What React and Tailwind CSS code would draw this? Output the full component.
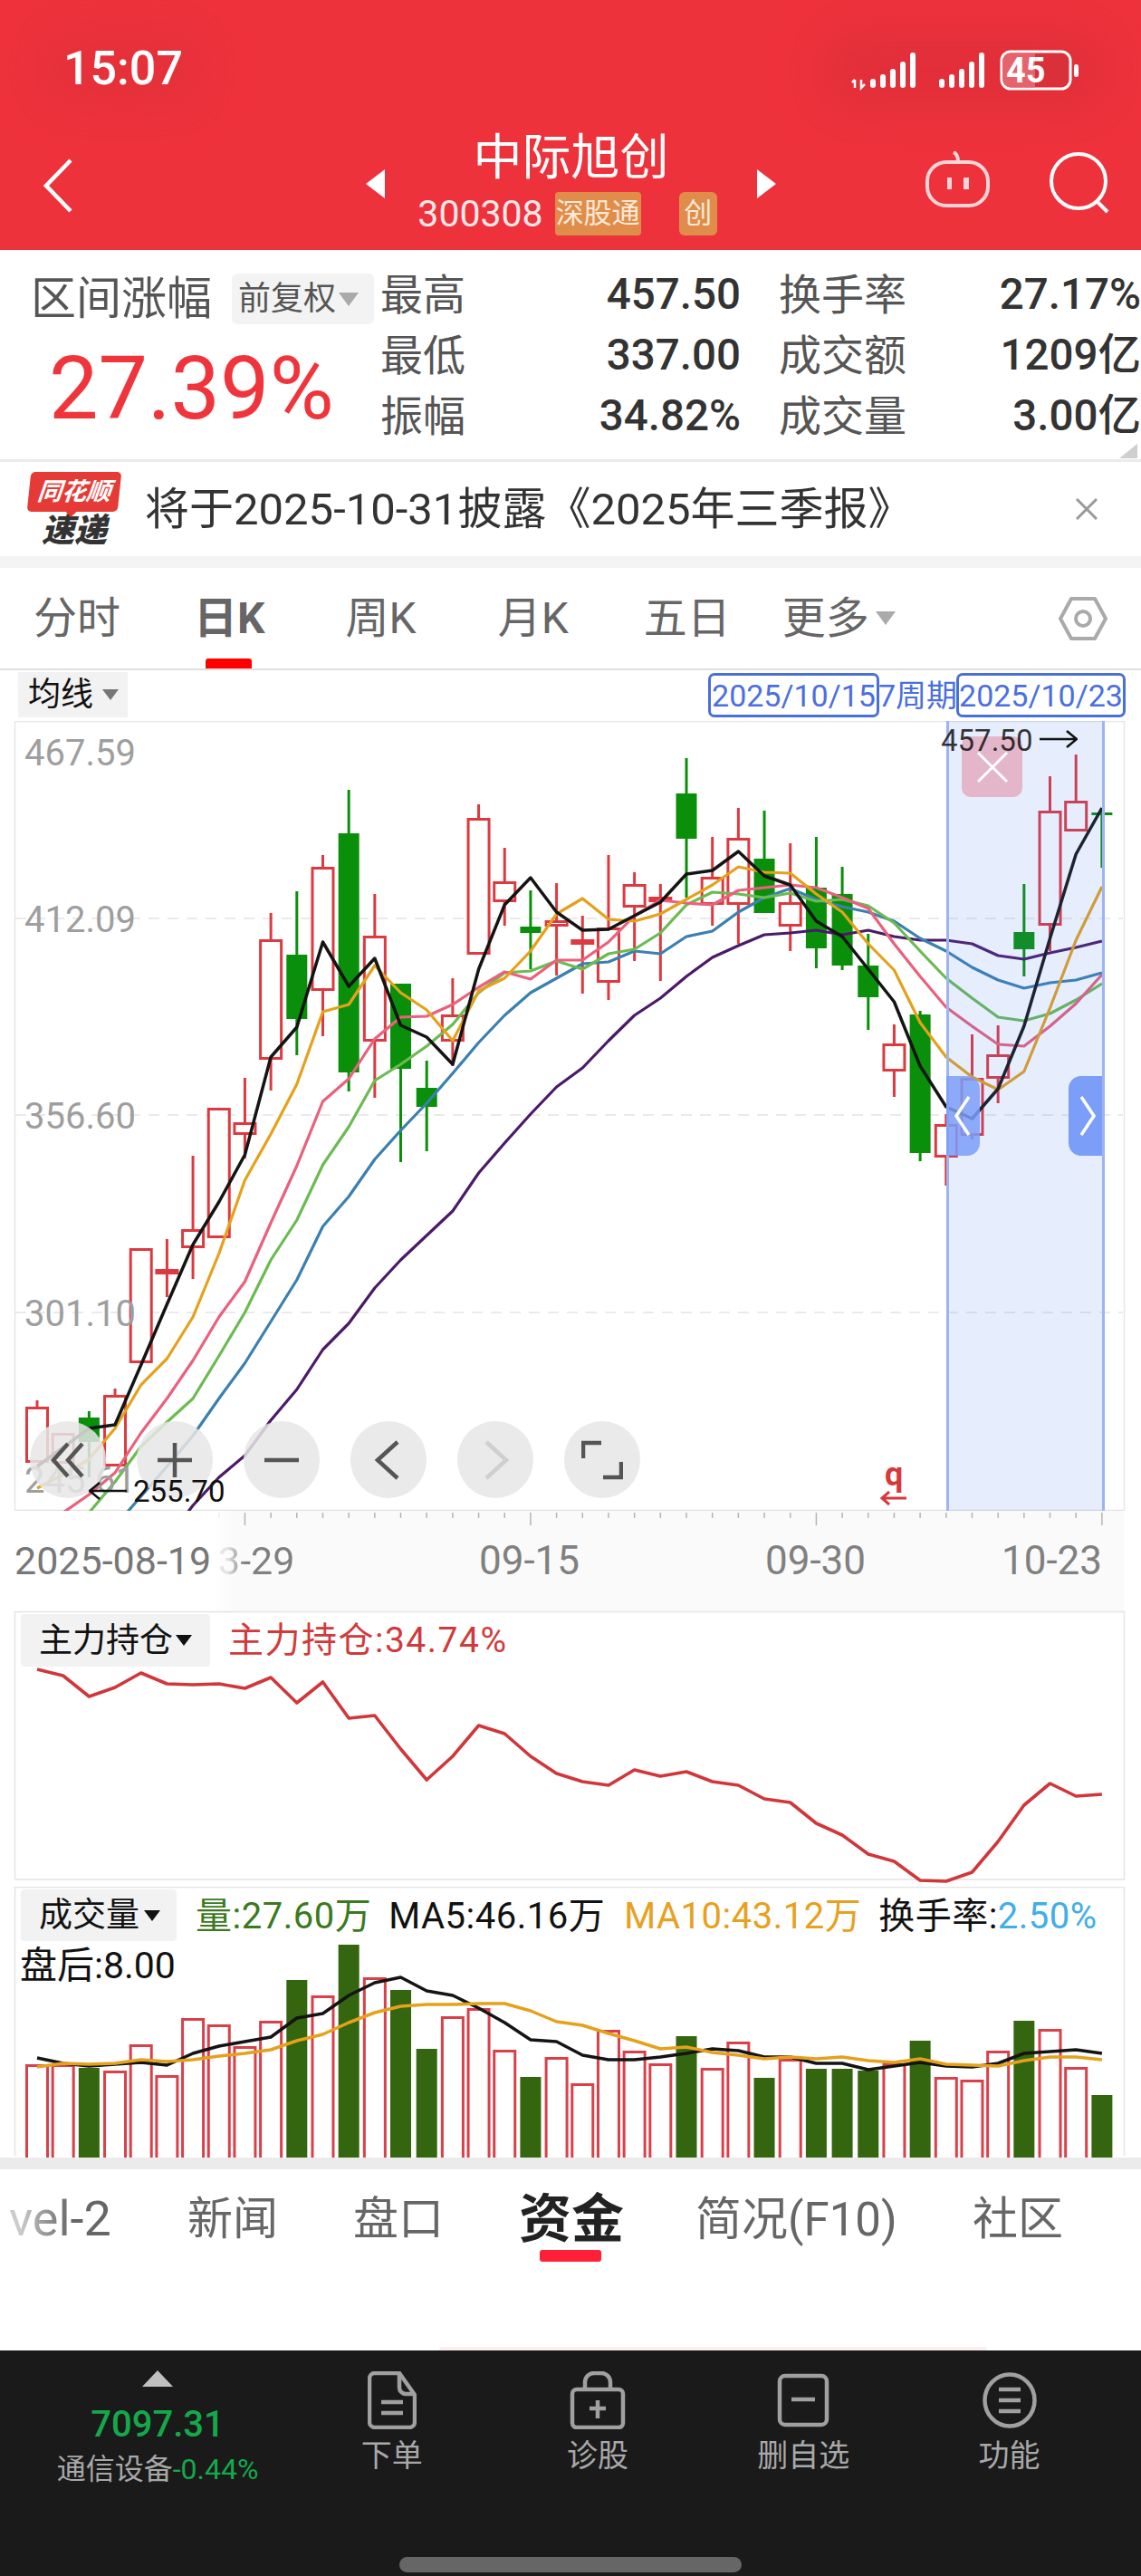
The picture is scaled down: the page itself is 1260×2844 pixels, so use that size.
const RED = '#dc3a40'
const GREEN = '#0a8f0a'
const VOL_GREEN = '#33660f'
const xAt = (i) => 41 + 28.68 * i

// [type, high, bodyTop, bodyBottom, low]
const candles = [
  ['r', 1546, 1553, 1615, 1615], ['r', 1582, 1582, 1616, 1616], ['g', 1558, 1565, 1592, 1631], ['r', 1533, 1540, 1619, 1619],
  ['r', 1378, 1378, 1505, 1505], ['r', 1368, 1401, 1404, 1432], ['r', 1276, 1357, 1378, 1412], ['r', 1223, 1223, 1367, 1367],
  ['r', 1190, 1239, 1253, 1279], ['r', 1008, 1037, 1170, 1204], ['g', 984, 1054, 1125, 1165], ['r', 944, 957, 1094, 1144],
  ['g', 872, 920, 1184, 1205], ['r', 987, 1033, 1150, 1212], ['g', 1086, 1086, 1180, 1283], ['g', 1171, 1201, 1222, 1271],
  ['r', 1080, 1120, 1150, 1177], ['r', 888, 903, 1054, 1054], ['r', 936, 973, 996, 1022], ['g', 983, 1023, 1030, 1070],
  ['r', 975, 1016, 1023, 1077], ['r', 1011, 1037, 1042, 1097], ['r', 944, 1024, 1085, 1104], ['r', 963, 976, 1002, 1061],
  ['r', 976, 990, 993, 1083], ['g', 837, 876, 926, 991], ['r', 924, 968, 999, 1022], ['r', 892, 925, 999, 1042],
  ['g', 895, 948, 1008, 1008], ['r', 931, 996, 1023, 1050], ['g', 924, 980, 1047, 1069], ['g', 957, 987, 1066, 1071],
  ['g', 1031, 1066, 1101, 1137], ['r', 1131, 1152, 1183, 1211], ['g', 1116, 1120, 1273, 1282], ['r', 1230, 1241, 1278, 1309],
  ['r', 1142, 1190, 1254, 1258], ['r', 1132, 1164, 1191, 1218], ['g', 976, 1029, 1048, 1078], ['r', 857, 895, 1022, 1050],
  ['r', 833, 884, 918, 918], ['g', 892, 897, 899, 958],
]

const maBlack = [1619, 1598, 1577, 1573, 1507, 1440, 1374, 1327, 1275, 1167, 1134, 1040, 1089, 1058, 1132, 1145, 1175, 1070, 999, 969, 1007, 1027, 1026, 1011, 996, 965, 961, 940, 967, 977, 1017, 1034, 1070, 1106, 1177, 1222, 1235, 1202, 1133, 1036, 943, 892]
const maOrange = [1643, 1628, 1611, 1577, 1529, 1500, 1454, 1384, 1303, 1252, 1197, 1117, 1109, 1066, 1096, 1115, 1149, 1094, 1080, 1050, 1009, 992, 1015, 1017, 1009, 993, 977, 957, 963, 964, 987, 1007, 1042, 1071, 1129, 1167, 1189, 1203, 1183, 1113, 1038, 979]
const maPink = [1690, 1670, 1650, 1626, 1582, 1544, 1502, 1454, 1415, 1350, 1287, 1216, 1191, 1147, 1123, 1122, 1109, 1090, 1073, 1081, 1060, 1060, 1040, 1011, 994, 997, 999, 983, 980, 977, 980, 991, 1003, 1042, 1078, 1112, 1133, 1153, 1155, 1133, 1108, 1076]
const maGreen = [1730, 1700, 1670, 1636, 1597, 1570, 1544, 1497, 1449, 1391, 1347, 1286, 1244, 1193, 1175, 1155, 1131, 1096, 1074, 1072, 1061, 1070, 1053, 1048, 1030, 999, 985, 987, 991, 986, 995, 993, 1000, 1019, 1050, 1080, 1102, 1123, 1127, 1119, 1104, 1086]
const maBlue = [1760, 1730, 1700, 1685, 1652, 1619, 1585, 1544, 1505, 1459, 1413, 1354, 1321, 1280, 1248, 1218, 1185, 1151, 1121, 1096, 1080, 1064, 1062, 1050, 1053, 1034, 1028, 1007, 991, 981, 993, 1001, 1007, 1017, 1036, 1050, 1068, 1082, 1091, 1085, 1082, 1074]
const maPurple = [1800, 1780, 1760, 1740, 1720, 1700, 1662, 1631, 1607, 1568, 1534, 1490, 1461, 1422, 1391, 1364, 1337, 1295, 1262, 1230, 1200, 1179, 1149, 1121, 1102, 1078, 1057, 1044, 1032, 1030, 1027, 1032, 1027, 1034, 1038, 1038, 1042, 1055, 1059, 1052, 1046, 1039]

const holdLine = [1843, 1850, 1873, 1863, 1847, 1859, 1860, 1859, 1864, 1852, 1880, 1857, 1897, 1894, 1931, 1965, 1939, 1905, 1914, 1939, 1958, 1967, 1971, 1954, 1961, 1956, 1967, 1971, 1986, 1990, 2013, 2026, 2047, 2055, 2076, 2077, 2067, 2033, 1993, 1969, 1983, 1981]

const volTops = [2279, 2279, 2283, 2286, 2257, 2291, 2228, 2235, 2259, 2231, 2186, 2203, 2147, 2183, 2197, 2262, 2226, 2217, 2263, 2293, 2271, 2300, 2241, 2264, 2278, 2248, 2283, 2254, 2294, 2273, 2284, 2284, 2286, 2278, 2253, 2293, 2296, 2264, 2231, 2240, 2282, 2313]
const volBlack = [2272, 2278, 2281, 2279, 2277, 2280, 2267, 2259, 2254, 2249, 2228, 2223, 2203, 2189, 2183, 2198, 2203, 2217, 2233, 2252, 2254, 2269, 2274, 2274, 2271, 2267, 2262, 2264, 2271, 2271, 2278, 2278, 2285, 2281, 2277, 2281, 2282, 2278, 2267, 2265, 2263, 2267]
const volOrange = [2282, 2278, 2279, 2278, 2274, 2276, 2274, 2270, 2267, 2263, 2253, 2246, 2233, 2222, 2215, 2213, 2213, 2212, 2212, 2220, 2232, 2236, 2245, 2253, 2262, 2260, 2266, 2269, 2273, 2271, 2273, 2271, 2275, 2277, 2273, 2279, 2280, 2281, 2275, 2271, 2271, 2274]

const pts = (ys) => ys.map((y, i) => `${xAt(i).toFixed(1)},${y}`).join(' ')

function Line({ ys, color, width = 3.2 }) {
  return <polyline points={pts(ys)} fill="none" stroke={color} strokeWidth={width} strokeLinejoin="round" />
}

function Tri({ className }) {
  return <span className={`inline-block w-0 h-0 border-x-[9px] border-x-transparent border-t-[12px] ${className}`} />
}

function StatusIcons() {
  const bars = [87, 82, 76, 68, 58]
  return (
    <svg className="w-[260px] h-[50px]" viewBox="935 53 260 50">
      <path d="M944 88v9M941 91l3-3M951 88v9l4-4" fill="none" stroke="#fff" strokeWidth="2.500" />
      {bars.map((t, i) => (
        <rect key={i} x={961 + i * 11} y={t} width="6" height={97 - t} rx="3" fill="#fff" />
      ))}
      {bars.map((t, i) => (
        <rect key={i} x={1037 + i * 11} y={t} width="6" height={97 - t} rx="3" fill="#fff" />
      ))}
      <rect x="1106" y="57" width="76" height="41" rx="10" fill="#d9303a" stroke="#fff" strokeWidth="3" />
      <path d="M1116 58.500h27v38h-27a9 9 0 0 1-9-9v-20a9 9 0 0 1 9-9z" fill="#e6636b" />
      <rect x="1186" y="71" width="5" height="14" rx="2.500" fill="#fff" />
    </svg>
  )
}

function CandleChart() {
  return (
    <svg className="absolute inset-0 w-[1260px] h-[872px]" viewBox="0 796 1260 872">
      <path d="M16.500 1668V796.500H1241.500V1668" fill="none" stroke="#e6e6e6" strokeWidth="1.500" />
      <path d="M16 1667.500H1241" stroke="#e2e2e2" strokeWidth="1.500" />
      {[1014, 1231, 1449].map((y) => (
        <line key={y} x1="17" x2="1240" y1={y} y2={y} stroke="#e4e4e4" strokeWidth="1.500" strokeDasharray="12 9" />
      ))}
      {candles.map(([t, hi, top, bot, lo], i) => {
        const x = xAt(i)
        const c = t === 'r' ? RED : GREEN
        return (
          <g key={i}>
            <line x1={x} x2={x} y1={hi} y2={lo} stroke={c} strokeWidth="3" />
            {t === 'r' ? (
              <rect x={x - 11.5} y={top + 1.5} width="23" height={Math.max(bot - top - 3, 3)} fill="#fff" stroke={c} strokeWidth="3" />
            ) : (
              <rect x={x - 11.5} y={top} width="23" height={Math.max(bot - top, 3)} fill={c} />
            )}
          </g>
        )
      })}
      <Line ys={maPurple} color="#4b1a68" />
      <Line ys={maBlue} color="#3a80b0" />
      <Line ys={maGreen} color="#6bbb52" />
      <Line ys={maPink} color="#e9617c" />
      <Line ys={maOrange} color="#e5a11c" />
      <Line ys={maBlack} color="#141414" width={3.5} />
      <path d="M1001 1654H974m8-7l-8 7 8 7" fill="none" stroke="#d8373c" strokeWidth="3" />
    </svg>
  )
}

function ChartButton({ className, children }) {
  return (
    <div className={`absolute top-[773px] w-[84px] h-[85px] rounded-full bg-[#e6e6e6]/85 flex items-center justify-center ${className}`}>
      {children}
    </div>
  )
}

function ChartControls() {
  const s = { fill: 'none', stroke: '#555', strokeWidth: 4.5 }
  return (
    <>
      <ChartButton className="left-[33px]">
        <svg width="44" height="44" viewBox="0 0 44 44"><path d="M22 4L6 22l16 18M38 4L22 22l16 18" {...s} /></svg>
      </ChartButton>
      <ChartButton className="left-[151px]">
        <svg width="44" height="44" viewBox="0 0 44 44"><path d="M22 3v38M3 22h38" {...s} /></svg>
      </ChartButton>
      <ChartButton className="left-[269px]">
        <svg width="44" height="44" viewBox="0 0 44 44"><path d="M3 22h38" {...s} /></svg>
      </ChartButton>
      <ChartButton className="left-[387px]">
        <svg width="44" height="44" viewBox="0 0 44 44"><path d="M32 2L10 22l22 20" {...s} /></svg>
      </ChartButton>
      <ChartButton className="left-[505px]">
        <svg width="44" height="44" viewBox="0 0 44 44"><path d="M12 2l22 20-22 20" {...s} stroke="#cfcfcf" /></svg>
      </ChartButton>
      <ChartButton className="left-[623px]">
        <svg width="46" height="44" viewBox="0 0 46 44"><path d="M2 20V3h20M44 24v17H24" {...s} /></svg>
      </ChartButton>
    </>
  )
}

function AxisTicks() {
  return (
    <svg className="absolute inset-0 w-[1260px] h-[20px]" viewBox="0 0 1260 20">
      {candles.map((_, i) => {
        const long = i === 8 || i === 19 || i === 30 || i === 41
        return <line key={i} x1={xAt(i)} x2={xAt(i)} y1="2" y2={long ? 16 : 8} stroke="#b5b5b5" strokeWidth="1.500" />
      })}
    </svg>
  )
}

function HoldChart() {
  return (
    <svg className="absolute inset-0 w-[1260px] h-[296px] overflow-visible" viewBox="0 1779 1260 296">
      <path d="M16.500 2075V1779.500H1241.500V2075H16.500" fill="none" stroke="#e4e4e4" strokeWidth="1.500" />
      <Line ys={holdLine} color="#d1363a" width={3.6} />
    </svg>
  )
}

function VolumeChart() {
  return (
    <svg className="absolute inset-0 w-[1260px] h-[299px]" viewBox="0 2083 1260 299">
      <path d="M16.500 2380V2083.500H1241.500V2380" fill="none" stroke="#e4e4e4" strokeWidth="1.500" />
      {volTops.map((top, i) => {
        const x = xAt(i)
        return candles[i][0] === 'r' ? (
          <rect key={i} x={x - 11.5} y={top + 1.5} width="23" height={2384 - top} fill="#fff" stroke="#d9404a" strokeWidth="3" />
        ) : (
          <rect key={i} x={x - 11.5} y={top} width="23" height={2382 - top} fill={VOL_GREEN} />
        )
      })}
      <Line ys={volBlack} color="#141414" width={3.5} />
      <Line ys={volOrange} color="#e5a11c" width={3.5} />
    </svg>
  )
}

function InfoRow({ label, value, labelWidth = 'w-[94px]' }) {
  return (
    <div className="h-[67px] flex items-center justify-between">
      <span className={`${labelWidth} -ml-[2px] text-[47px] leading-none text-[#555] whitespace-nowrap`}>{label}</span>
      <span className="text-[47.500px] leading-none font-medium text-[#333] whitespace-nowrap">{value}</span>
    </div>
  )
}

function Tab({ className, children }) {
  return <span className={`text-[48px] leading-none whitespace-nowrap text-[#666] ${className}`}>{children}</span>
}

function NavItem({ label, children }) {
  return (
    <div className="w-[227.3px] flex flex-col items-center">
      <div className="h-[66px] flex items-center">{children}</div>
      <div className="mt-[11px] text-[34px] leading-none text-[#a8a8a8]">{label}</div>
    </div>
  )
}

export default function App() {
  const ic = { fill: 'none', stroke: '#a0a0a0', strokeWidth: 4.5 }
  return (
    <div className="w-[1260px] h-[2844px] overflow-hidden bg-white [font-family:Roboto,'Noto_Sans_CJK_SC',sans-serif]">
      {/* top red bar */}
      <header className="relative h-[276px] bg-[#ee323c] text-white overflow-hidden">
        <div className="absolute left-[45px] top-[35px] w-[180px] h-[80px] rounded-[30px] bg-[#dc2f38]/50 blur-xl" />
        <div className="absolute left-[910px] top-[35px] w-[310px] h-[85px] rounded-[30px] bg-[#d92d37]/60 blur-xl" />
        <div className="relative h-[148px] flex items-start justify-between pl-[70px] pr-[65px] pt-[50px]">
          <span className="text-[52px] leading-[52px] font-medium">15:07</span>
          <div className="relative mt-[3px]">
            <StatusIcons />
            <span className="absolute left-[176px] top-[5px] text-[38px] leading-[40px] font-bold">45</span>
          </div>
        </div>
        <div className="relative flex items-start pl-[48px]">
          <svg className="mt-[27px] w-[32px] h-[60px]" viewBox="0 0 32 60"><path d="M30 2L3 30l27 28" fill="none" stroke="#fff" strokeWidth="4.500" /></svg>
          <div className="ml-[324px] mt-[39px] w-0 h-0 border-y-[16px] border-y-transparent border-r-[21px] border-r-white" />
          <div className="w-[411px] flex flex-col items-center">
            <div className="text-[54px] leading-[54px]">中际旭创</div>
            <div className="mt-[10px] flex items-center pr-[8px] h-[48px]">
              <span className="text-[41px] leading-none text-[#ffe9ea]">300308</span>
              <span className="ml-[13px] w-[95px] h-[48px] rounded-[4px] bg-[#e08d4b] text-[31px] leading-[48px] text-center text-[#fbe9d8]">深股通</span>
              <span className="ml-[42px] w-[42px] h-[48px] rounded-[6px] bg-[#e08d4b] text-[31px] leading-[48px] text-center text-[#fbe9d8]">创</span>
            </div>
          </div>
          <div className="mt-[39px] w-0 h-0 border-y-[16px] border-y-transparent border-l-[21px] border-l-white" />
          <svg className="ml-[165px] mt-[19px] w-[71px] h-[62px]" viewBox="0 0 71 62">
            <rect x="2" y="12" width="67" height="48" rx="21" fill="none" stroke="#fbd5d8" strokeWidth="4" />
            <path d="M31 1c4 2 5 6 5 10" fill="none" stroke="#fbd5d8" strokeWidth="4" />
            <rect x="24" y="29" width="5" height="13" fill="#fbd5d8" />
            <rect x="42" y="29" width="6" height="13" fill="#fbd5d8" />
          </svg>
          <svg className="ml-[66px] mt-[20px] w-[68px] h-[68px]" viewBox="0 0 68 68">
            <circle cx="32" cy="32" r="30" fill="none" stroke="#fff" strokeWidth="4" />
            <path d="M52 54l12 12" stroke="#fff" strokeWidth="4" />
          </svg>
        </div>
      </header>

      {/* interval stats */}
      <section className="relative h-[234px] flex border-b-[3px] border-[#ebebeb]">
        <div className="w-[422px] pl-[34px] pt-[26px]">
          <div className="flex items-center">
            <span className="w-[200px] text-[50px] leading-[56px] text-[#555] whitespace-nowrap">区间涨幅</span>
            <div className="ml-[22px] w-[157px] h-[56px] rounded-[6px] bg-[#f3f3f3] flex items-center pl-[7px]">
              <span className="text-[36px] leading-none text-[#555] whitespace-nowrap">前复权</span>
              <Tri className="ml-[3px] border-t-[#aaa] border-x-[11px] border-t-[15px]" />
            </div>
          </div>
          <div className="mt-[23px] pl-[20px] text-[97px] leading-[97px] text-[#f0343c] whitespace-nowrap">27.39%</div>
        </div>
        <div className="w-[396px] pt-[16px]">
          <InfoRow label="最高" value="457.50" />
          <InfoRow label="最低" value="337.00" />
          <InfoRow label="振幅" value="34.82%" />
        </div>
        <div className="ml-[44px] w-[398px] pt-[16px]">
          <InfoRow label="换手率" value="27.17%" labelWidth="w-[141px]" />
          <InfoRow label="成交额" value="1209亿" labelWidth="w-[141px]" />
          <InfoRow label="成交量" value="3.00亿" labelWidth="w-[141px]" />
        </div>
        <div className="absolute right-[4px] bottom-[1px] w-0 h-0 border-l-[20px] border-l-transparent border-b-[16px] border-b-[#cfcfcf]" />
      </section>

      {/* notice */}
      <section className="h-[105px] flex items-center border-b-[1px] border-[#f4f4f4]">
        <div className="ml-[32px] w-[100px] flex flex-col items-center">
          <div className="relative w-[100px] h-[44px] rounded-[5px] bg-[#e63a36] -skew-x-6 flex items-center justify-center text-[27px] leading-none font-bold italic text-white whitespace-nowrap">
            同花顺
            <span className="absolute left-[42px] -bottom-[6px] w-0 h-0 border-x-[7px] border-x-transparent border-t-[7px] border-t-[#e63a36]" />
          </div>
          <div className="mt-[3px] text-[36px] leading-[36px] font-black italic text-[#333] whitespace-nowrap">速递</div>
        </div>
        <span className="ml-[28px] text-[49px] leading-none text-[#333] whitespace-nowrap">将于2025-10-31披露《2025年三季报》</span>
        <svg className="ml-[180px] w-[24px] h-[24px]" viewBox="0 0 24 24"><path d="M1 1l22 22M23 1L1 23" stroke="#999" strokeWidth="3" /></svg>
      </section>
      <div className="h-[12px] bg-[#f4f4f4]" />

      {/* period tabs */}
      <section className="relative h-[113px] flex items-center pl-[37px] border-b-[2px] border-[#dedede]">
        <Tab>分时</Tab>
        <Tab className="ml-[81px] font-bold text-[#111]">日K</Tab>
        <Tab className="ml-[89px]">周K</Tab>
        <Tab className="ml-[90px]">月K</Tab>
        <Tab className="ml-[83px]">五日</Tab>
        <Tab className="ml-[57px]">更多</Tab>
        <Tri className="ml-[7px] border-t-[#aaa] border-x-[11px] border-t-[15px]" />
        <svg className="ml-[180px] w-[54px] h-[50px]" viewBox="0 0 54 50">
          <path d="M14 3h26l12 22-12 22H14L2 25z" fill="none" stroke="#aaa" strokeWidth="4" strokeLinejoin="round" />
          <circle cx="27" cy="25" r="8" fill="none" stroke="#aaa" strokeWidth="4" />
        </svg>
        <div className="absolute left-[227px] bottom-0 w-[51px] h-[11px] rounded-t-[3px] bg-[#f00]" />
      </section>

      {/* ma selector + period range */}
      <section className="h-[56px] flex items-start pl-[20px]">
        <div className="mt-[2px] w-[121px] h-[50px] bg-[#f2f2f2] flex items-center pl-[11px]">
          <span className="text-[36px] leading-none text-[#111]">均线</span>
          <Tri className="ml-[10px] border-t-[#777]" />
        </div>
        <div className="ml-[641px] mt-[3px] w-[189px] h-[49px] rounded-[7px] border-[3px] border-[#4a70d8] flex items-center justify-center text-[34px] leading-none text-[#4a6fe0]">2025/10/15</div>
        <div className="w-[85px] mt-[3px] h-[49px] flex items-center justify-center text-[34px] leading-none text-[#4a6fe0] whitespace-nowrap">7周期</div>
        <div className="mt-[3px] w-[187px] h-[49px] rounded-[7px] border-[3px] border-[#4a70d8] flex items-center justify-center text-[34px] leading-none text-[#4a6fe0]">2025/10/23</div>
      </section>

      {/* candles */}
      <section className="relative h-[872px] overflow-hidden">
        <CandleChart />
        <span className="absolute left-[27px] top-[36px] -translate-y-1/2 text-[40px] leading-none text-[#9e9e9e]">467.59</span>
        <span className="absolute left-[27px] top-[220px] -translate-y-1/2 text-[40px] leading-none text-[#9e9e9e]">412.09</span>
        <span className="absolute left-[27px] top-[437px] -translate-y-1/2 text-[40px] leading-none text-[#9e9e9e]">356.60</span>
        <span className="absolute left-[27px] top-[655px] -translate-y-1/2 text-[40px] leading-none text-[#9e9e9e]">301.10</span>
        <span className="absolute left-[27px] top-[839px] -translate-y-1/2 text-[40px] leading-none text-[#9e9e9e]">245.61</span>
        <span className="absolute left-[977px] top-[832px] -translate-y-1/2 text-[36px] leading-none font-bold text-[#d8373c]">q</span>

        <div className="absolute left-[1045px] top-0 bottom-0 w-[175px] border-x-[3px] border-[#9db4f0] bg-[#4f7cf0]/14" />
        <div className="absolute left-[1062px] top-[17px] w-[67px] h-[67px] rounded-[10px] bg-[#e07f95]/50 flex items-center justify-center">
          <svg width="36" height="36" viewBox="0 0 36 36"><path d="M2 2l32 32M34 2L2 34" stroke="#fff" strokeWidth="3" /></svg>
        </div>
        <span className="absolute left-[1039px] top-[21px] -translate-y-1/2 text-[33px] leading-none text-[#111]/85">457.50</span>
        <svg className="absolute left-[1148px] top-[10px] w-[42px] h-[20px]" viewBox="0 0 42 20"><path d="M0 10h40m-10-9l11 9-11 9" fill="none" stroke="#111" strokeWidth="2.500" /></svg>
        <div className="absolute left-[1045px] top-[392px] w-[37px] h-[88px] rounded-r-[14px] bg-[#7b9ef8]/85 flex items-center pl-[9px]">
          <svg width="18" height="44" viewBox="0 0 18 44"><path d="M16 1L2 22l14 21" fill="none" stroke="#fff" strokeWidth="3.500" /></svg>
        </div>
        <div className="absolute left-[1180px] top-[392px] w-[37px] h-[88px] rounded-l-[14px] bg-[#7b9ef8] flex items-center pl-[12px]">
          <svg width="18" height="44" viewBox="0 0 18 44"><path d="M2 1l14 21L2 43" fill="none" stroke="#fff" strokeWidth="3.500" /></svg>
        </div>
        <ChartControls />
        <svg className="absolute left-[98px] top-[840px] w-[42px] h-[20px]" viewBox="0 0 42 20"><path d="M42 10H2m10-9L1 10l11 9" fill="none" stroke="#111" strokeWidth="2.500" /></svg>
        <span className="absolute left-[147px] top-[850px] -translate-y-1/2 text-[33px] leading-none text-[#111]">255.70</span>
      </section>

      {/* date axis */}
      <section className="relative h-[111px] w-[1241px] bg-[#fafafa] overflow-hidden">
        <AxisTicks />
        <div className="absolute left-0 top-0 bottom-0 w-[258px] bg-gradient-to-r from-white from-92% to-transparent" />
        <span className="absolute left-[16px] top-[55px] -translate-y-1/2 text-[43px] leading-none text-[#777]">2025-08-19</span>
        <span className="absolute left-[241px] top-[55px] -translate-y-1/2 text-[43px] leading-none whitespace-nowrap bg-gradient-to-r from-[#e4e4e4] to-[#808080] from-[10px] to-[30px] bg-clip-text text-transparent">3-29</span>
        <span className="absolute left-[529px] top-[55px] -translate-y-1/2 text-[44px] leading-none text-[#808080]">09-15</span>
        <span className="absolute left-[845px] top-[55px] -translate-y-1/2 text-[44px] leading-none text-[#808080]">09-30</span>
        <span className="absolute left-[1106px] top-[55px] -translate-y-1/2 text-[44px] leading-none text-[#808080]">10-23</span>
      </section>

      {/* main holdings */}
      <section className="relative h-[296px]">
        <HoldChart />
        <div className="absolute left-[23px] top-[3px] w-[209px] h-[58px] rounded-[4px] bg-[#f2f2f2] flex items-center pl-[20px]">
          <span className="text-[37px] leading-none text-[#111] whitespace-nowrap">主力持仓</span>
          <Tri className="ml-[3px] border-t-[#111]" />
        </div>
        <span className="absolute left-[252px] top-[32px] -translate-y-1/2 text-[39px] leading-none tracking-[1.500px] text-[#d13a3a] whitespace-nowrap">主力持仓:34.74%</span>
      </section>
      <div className="h-[8px]" />

      {/* volume */}
      <section className="relative h-[299px] overflow-hidden">
        <VolumeChart />
        <div className="absolute left-[23px] top-[3px] w-[172px] h-[57px] rounded-[4px] bg-[#f2f2f2] flex items-center pl-[20px]">
          <span className="text-[37px] leading-none text-[#111] whitespace-nowrap">成交量</span>
          <Tri className="ml-[5px] border-t-[#111]" />
        </div>
        <div className="absolute left-[216px] top-[33px] -translate-y-1/2 flex text-[40px] leading-none tracking-[0.500px] whitespace-nowrap">
          <span className="text-[#3a7a1e]">量:27.60万</span>
          <span className="ml-[19px] text-[#111]">MA5:46.16万</span>
          <span className="ml-[21px] text-[#e8a020]">MA10:43.12万</span>
          <span className="ml-[19px] text-[#111]">换手率:<span className="text-[#42aee8]">2.50%</span></span>
        </div>
        <span className="absolute left-[22px] top-[87px] -translate-y-1/2 text-[41px] leading-none text-[#111] whitespace-nowrap">盘后:8.00</span>
      </section>
      <div className="h-[13px] bg-[#ebebeb]" />

      {/* detail tabs */}
      <section className="relative h-[200px] overflow-hidden">
        <div className="h-[110px] flex items-center text-[50px] leading-none text-[#666] whitespace-nowrap">
          <span className="ml-[10px] w-[115px] text-[54px] bg-gradient-to-r from-[#ccc] to-[#666] from-10% to-60% bg-clip-text text-transparent">vel-2</span>
          <span className="ml-[82px]">新闻</span>
          <span className="ml-[83px]">盘口</span>
          <span className="ml-[83px] text-[58px] font-bold text-[#222]">资金</span>
          <span className="ml-[79px] w-[223px] text-[51px]">简况(F10)</span>
          <span className="ml-[83px]">社区</span>
        </div>
        <div className="absolute left-[596px] top-[89px] w-[68px] h-[13px] rounded-[3px] bg-[#ff2038]" />
        <div className="absolute left-[485px] bottom-0 w-[605px] h-[4px] rounded-t-[6px] bg-[#fbeeee]" />
      </section>

      {/* bottom nav */}
      <footer className="h-[249px] bg-[#1a1a1a] flex flex-col">
        <div className="flex pt-[22px]">
          <div className="w-[319px] pl-[29px] flex flex-col">
            <div className="w-[290px] flex flex-col items-center">
              <div className="w-0 h-0 border-x-[17px] border-x-transparent border-b-[18px] border-b-[#c0c0c0]" />
              <div className="mt-[22px] text-[40px] leading-none font-medium text-[#15a84a]">7097.31</div>
              <div className="mt-[13px] text-[32px] leading-none text-[#a8a8a8] whitespace-nowrap">通信设备<span className="text-[#15a84a]">-0.44%</span></div>
            </div>
          </div>
          <NavItem label="下单">
            <svg width="54" height="64" viewBox="0 0 54 64">
              <path d="M8 2h27l17 24v30a6 6 0 0 1-6 6H8a6 6 0 0 1-6-6V8a6 6 0 0 1 6-6z" {...ic} />
              <path d="M35 2v16a7 7 0 0 0 7 7h10M15 34h24M15 46h24" {...ic} />
            </svg>
          </NavItem>
          <NavItem label="诊股">
            <svg width="62" height="64" viewBox="0 0 62 64">
              <rect x="3" y="20" width="56" height="42" rx="5" {...ic} />
              <path d="M17 20V12a10 10 0 0 1 10-10h8a10 10 0 0 1 10 10v8M31 32v20M22 41h18" {...ic} />
            </svg>
          </NavItem>
          <NavItem label="删自选">
            <svg width="58" height="60" viewBox="0 0 58 60">
              <rect x="3" y="3" width="52" height="54" rx="6" {...ic} />
              <path d="M16 29h26" {...ic} />
            </svg>
          </NavItem>
          <NavItem label="功能">
            <svg width="60" height="62" viewBox="0 0 60 62">
              <ellipse cx="30" cy="31" rx="27.500" ry="28.500" {...ic} />
              <path d="M18 19h24M18 31h24M18 43h24" {...ic} />
            </svg>
          </NavItem>
        </div>
        <div className="mt-[81px] ml-[441px] w-[378px] h-[17px] rounded-full bg-[#666]" />
      </footer>
    </div>
  )
}
